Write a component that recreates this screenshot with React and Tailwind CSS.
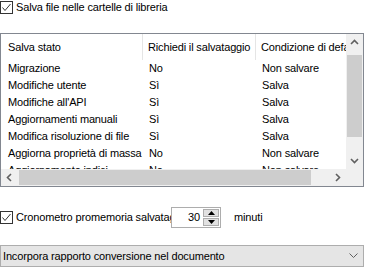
import React from 'react'

const rows = [
  ['Migrazione', 'No', 'Non salvare'],
  ['Modifiche utente', 'Sì', 'Salva'],
  ["Modifiche all'API", 'Sì', 'Salva'],
  ['Aggiornamenti manuali', 'Sì', 'Salva'],
  ['Modifica risoluzione di file', 'Sì', 'Salva'],
  ['Aggiorna proprietà di massa', 'No', 'Non salvare'],
  ['Aggiornamento indici', 'No', 'Non salvare'],
]

function CheckBox() {
  return (
    <span className="flex h-[13px] w-[13px] shrink-0 items-center justify-center border border-[#333333] bg-white">
      <svg width="11" height="11" viewBox="0 0 11 11" fill="none">
        <path d="M1.5 5.5 L4 8.5 L9.5 2" stroke="#333333" strokeWidth="1" />
      </svg>
    </span>
  )
}

function Chevron({ dir, color = '#606060' }) {
  const d = {
    up: 'M1 6 L4.5 2.5 L8 6',
    down: 'M1 3 L4.5 6.5 L8 3',
    left: 'M6 1 L2.5 4.5 L6 8',
    right: 'M3 1 L6.5 4.5 L3 8',
  }[dir]
  return (
    <svg width="9" height="9" viewBox="0 0 9 9" fill="none">
      <path d={d} stroke={color} strokeWidth="1.6" />
    </svg>
  )
}

export default function App() {
  return (
    <div className="relative h-[267px] w-[365px] overflow-hidden bg-white font-['Liberation_Sans',sans-serif] text-[11px] tracking-[-0.15px] text-black">
      <div className="flex h-[14px] items-center gap-[3px]">
        <CheckBox />
        <span>Salva file nelle cartelle di libreria</span>
      </div>

      <div className="mt-[19px] flex h-[154px] w-[364px] flex-col border border-[#828790]">
        <div className="flex h-[135px]">
          <div className="flex-1 overflow-hidden">
            <div className="flex h-[26px] items-center">
              <div className="w-[142px] shrink-0 border-r border-[#e5e5e5] pl-[7px] leading-[26px]">Salva stato</div>
              <div className="w-[113px] shrink-0 border-r border-[#e5e5e5] pl-[5px] leading-[26px] whitespace-nowrap">Richiedi il salvataggio</div>
              <div className="shrink-0 pl-[5px] leading-[26px] whitespace-nowrap">Condizione di default</div>
            </div>
            {rows.map((r) => (
              <div key={r[0]} className="flex h-[17px] items-center whitespace-nowrap">
                <div className="w-[143px] shrink-0 pl-[7px]">{r[0]}</div>
                <div className="w-[113px] shrink-0 pl-[5px]">{r[1]}</div>
                <div className="shrink-0 pl-[5px]">{r[2]}</div>
              </div>
            ))}
          </div>
          <div className="flex w-[17px] shrink-0 flex-col bg-[#f0f0f0]">
            <div className="flex h-[17px] items-center justify-center"><Chevron dir="up" /></div>
            <div className="flex flex-1 flex-col px-[1px]">
              <div className="h-[4px]" />
              <div className="h-[82px] bg-[#cdcdcd]" />
            </div>
            <div className="flex h-[17px] items-center justify-center"><Chevron dir="down" /></div>
          </div>
        </div>
        <div className="flex h-[17px] bg-[#f0f0f0]">
          <div className="flex w-[17px] items-center justify-center"><Chevron dir="left" /></div>
          <div className="my-[1px] ml-[1px] w-[292px] bg-[#cdcdcd]" />
          <div className="flex-1" />
          <div className="flex w-[17px] items-center justify-center"><Chevron dir="right" /></div>
          <div className="w-[17px]" />
        </div>
      </div>

      <div className="mt-[20px] flex h-[21px] items-center">
        <CheckBox />
        <span className="ml-[3px] w-[155px] overflow-hidden whitespace-nowrap">Cronometro promemoria salvataggio</span>
        <div className="flex h-[21px] w-[50px] border border-[#adadad] bg-white">
          <div className="flex-1 pr-[3px] text-right leading-[19px]">30</div>
          <div className="flex w-[17px] flex-col gap-[1px] py-[1px] pr-[1px]">
            <div className="flex flex-1 items-center justify-center border border-[#adadad] bg-[#e1e1e1]">
              <svg width="7" height="4" viewBox="0 0 7 4"><path d="M0 4 L3.5 0 L7 4 Z" fill="#000" /></svg>
            </div>
            <div className="flex flex-1 items-center justify-center border border-[#adadad] bg-[#e1e1e1]">
              <svg width="7" height="4" viewBox="0 0 7 4"><path d="M0 0 L3.5 4 L7 0 Z" fill="#000" /></svg>
            </div>
          </div>
        </div>
        <span className="ml-[13px]">minuti</span>
      </div>

      <div className="mt-[17px] flex h-[22px] w-[364px] items-center justify-between border border-[#adadad] bg-[#e5e5e5] pl-[2px] pr-[5px]">
        <span>Incorpora rapporto conversione nel documento</span>
        <svg width="9" height="6" viewBox="0 0 9 6" fill="none"><path d="M0.5 0.5 L4.5 4.5 L8.5 0.5" stroke="#606060" strokeWidth="1" /></svg>
      </div>
    </div>
  )
}
